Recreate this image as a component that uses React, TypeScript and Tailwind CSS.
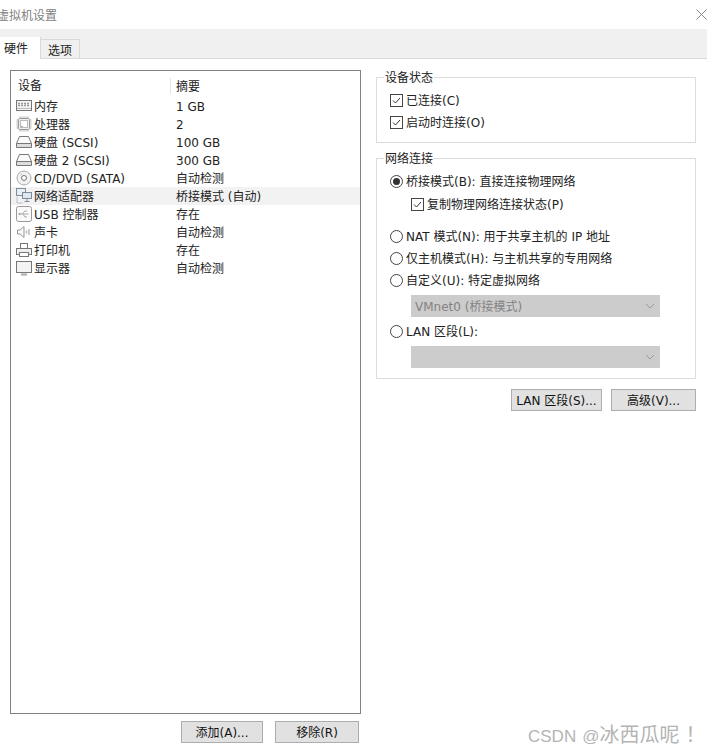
import type { ReactNode } from "react";

const devices: { icon: ReactNode; name: string; summary: string; active?: boolean }[] = [
  { icon: <MemoryIcon />, name: "内存", summary: "1 GB" },
  { icon: <CpuIcon />, name: "处理器", summary: "2" },
  { icon: <DiskIcon />, name: "硬盘 (SCSI)", summary: "100 GB" },
  { icon: <DiskIcon />, name: "硬盘 2 (SCSI)", summary: "300 GB" },
  { icon: <CdIcon />, name: "CD/DVD (SATA)", summary: "自动检测" },
  { icon: <NetIcon />, name: "网络适配器", summary: "桥接模式 (自动)", active: true },
  { icon: <UsbIcon />, name: "USB 控制器", summary: "存在" },
  { icon: <SoundIcon />, name: "声卡", summary: "自动检测" },
  { icon: <PrinterIcon />, name: "打印机", summary: "存在" },
  { icon: <MonitorIcon />, name: "显示器", summary: "自动检测" },
];

function MemoryIcon() {
  return (
    <svg width="16" height="16" viewBox="0 0 16 16" fill="none" stroke="#777">
      <rect x="0.5" y="2.5" width="15" height="10" fill="#f4f4f4" />
      <path d="M2 5.5h12M2 7.5h12" stroke="#999" strokeDasharray="2 1" strokeWidth="1.5" />
      <path d="M1 10.5h14" stroke="#bbb" />
    </svg>
  );
}

function CpuIcon() {
  return (
    <svg width="16" height="16" viewBox="0 0 16 16" fill="none" stroke="#999">
      <rect x="2.5" y="2.5" width="11" height="11" rx="1" fill="#eee" />
      <rect x="4.5" y="4.5" width="7" height="7" fill="#fff" stroke="#bbb" />
      <path d="M4 0.5v2M6 0.5v2M8 0.5v2M10 0.5v2M12 0.5v2M4 13.5v2M6 13.5v2M8 13.5v2M10 13.5v2M12 13.5v2M0.5 4h2M0.5 6h2M0.5 8h2M0.5 10h2M0.5 12h2M13.5 4h2M13.5 6h2M13.5 8h2M13.5 10h2M13.5 12h2" stroke="#aaa" />
      <path d="M5.5 10.5h1" stroke="#555" />
    </svg>
  );
}

function DiskIcon() {
  return (
    <svg width="16" height="16" viewBox="0 0 16 16" fill="none" stroke="#777">
      <path d="M3.5 2.5h9l3 7v4h-15v-4z" fill="#fafafa" />
      <path d="M0.5 9.5h15" />
      <rect x="1" y="10" width="14" height="3" fill="#ddd" stroke="none" />
    </svg>
  );
}

function CdIcon() {
  return (
    <svg width="16" height="16" viewBox="0 0 16 16" fill="none" stroke="#aaa">
      <circle cx="8" cy="8" r="7" fill="#f2f2f2" />
      <circle cx="8" cy="8" r="2.5" fill="#fff" stroke="#777" />
      <path d="M4 5.5a5 5 0 0 1 2-1.5" stroke="#ccc" />
    </svg>
  );
}

function NetIcon() {
  return (
    <svg width="16" height="16" viewBox="0 0 16 16" fill="none" stroke="#7c8c98">
      <rect x="0.5" y="0.5" width="9" height="7" fill="#e8eef3" />
      <rect x="6.5" y="4.5" width="9" height="6" fill="#dce7f0" />
      <path d="M11 10.5v3M8.5 13.5h5" />
      <path d="M1 9.5v5.5h6" stroke="#88a" strokeDasharray="1 1" />
    </svg>
  );
}

function UsbIcon() {
  return (
    <svg width="16" height="16" viewBox="0 0 16 16" fill="none" stroke="#999">
      <rect x="0.5" y="0.5" width="15" height="15" rx="2" fill="#fafafa" />
      <path d="M3.5 8h9M6 8l3-3h2M7 8l2 3h2" stroke="#aaa" />
      <circle cx="3.5" cy="8" r="1" fill="#999" stroke="none" />
    </svg>
  );
}

function SoundIcon() {
  return (
    <svg width="16" height="16" viewBox="0 0 16 16" fill="none" stroke="#999">
      <path d="M1.5 6v4h2.5l4 3.5v-11L4 6z" fill="#f8f8f8" />
      <path d="M10.5 6.5v3M13 5v6" stroke="#bbb" strokeWidth="1.5" />
    </svg>
  );
}

function PrinterIcon() {
  return (
    <svg width="16" height="16" viewBox="0 0 16 16" fill="none" stroke="#777">
      <rect x="4.5" y="1.5" width="7" height="5" fill="#fff" />
      <rect x="0.5" y="6.5" width="15" height="6" fill="#f0f0f0" />
      <rect x="3.5" y="10.5" width="9" height="4" fill="#fff" />
    </svg>
  );
}

function MonitorIcon() {
  return (
    <svg width="16" height="16" viewBox="0 0 16 16" fill="none" stroke="#777">
      <rect x="0.5" y="1.5" width="15" height="11" fill="#f3f3f3" />
      <path d="M5 14.5h6" stroke="#aaa" strokeWidth="2" />
    </svg>
  );
}

function Check({ label }: { label: string }) {
  return (
    <div className="flex h-[14px] items-center gap-[3px]">
      <span className="flex h-[13px] w-[13px] shrink-0 items-center justify-center border border-[#444] bg-white">
        <svg width="11" height="11" viewBox="0 0 11 11" fill="none" stroke="#333">
          <path d="M2 5.5l2.5 2.5L9 3" />
        </svg>
      </span>
      <span className="pt-[2px]">{label}</span>
    </div>
  );
}

function Radio({ label, checked }: { label: string; checked?: boolean }) {
  return (
    <div className="flex h-[14px] items-center gap-[3px]">
      <span className="flex h-[13px] w-[13px] shrink-0 items-center justify-center rounded-full border border-[#444] bg-white">
        {checked && <span className="h-[7px] w-[7px] rounded-full bg-[#333]" />}
      </span>
      <span className="pt-[2px]">{label}</span>
    </div>
  );
}

function DisabledSelect({ value }: { value?: string }) {
  return (
    <div className="ml-[21px] flex h-[22px] w-[249px] items-center justify-between bg-[#cccccc] pl-1 pr-[5px] text-[#838383]">
      <span className="pt-[2px]">{value}</span>
      <svg width="10" height="6" viewBox="0 0 10 6" fill="none" stroke="#999">
        <path d="M1 1l4 4 4-4" />
      </svg>
    </div>
  );
}

function Button({ label, className }: { label: string; className: string }) {
  return (
    <button
      type="button"
      className={`flex h-[22px] items-center justify-center border border-[#adadad] bg-[#e1e1e1] pt-[2px] text-[#111] ${className}`}
    >
      {label}
    </button>
  );
}

function Group({ title, className, children }: { title: string; className: string; children: ReactNode }) {
  return (
    <fieldset className={`relative border border-[#dcdcdc] ${className}`}>
      <span className="absolute -top-[7px] left-[7px] bg-white px-px leading-[14px]">{title}</span>
      {children}
    </fieldset>
  );
}

export default function App() {
  return (
    <div className="relative flex h-[754px] w-[707px] flex-col overflow-hidden bg-white text-[12px] leading-[14px] text-[#222] [font-family:'DejaVu_Sans','Noto_Sans_CJK_SC',sans-serif]">
      <div className="flex h-[29px] items-center justify-between">
        <span className="-ml-[3px] pt-[2px] text-[#808080]">虚拟机设置</span>
        <svg width="11" height="11" viewBox="0 0 11 11" fill="none" stroke="#888">
          <path d="M0.5 0.5l10 10M10.5 0.5l-10 10" />
        </svg>
      </div>

      <div className="flex h-[30px] items-end border-b border-[#d9d9d9] bg-[#f0f0f0]">
        <div className="-mb-px flex h-[22px] w-[41px] items-center border-r border-[#d9d9d9] bg-white pl-[4px] pt-[2px]">硬件</div>
        <div className="flex h-[19px] w-[39px] items-center justify-center border-t border-r border-[#d9d9d9] bg-[#f0f0f0] pt-[3px]">选项</div>
      </div>

      <div className="flex pl-[10px] pt-[11px]">
        <div className="flex w-[351px] flex-col">
          <div className="h-[644px] border border-[#828282] pt-[7px]">
            <div className="flex h-[16px] items-center">
              <span className="w-[159px] pl-[7px]">设备</span>
              <span className="h-[16px] border-l border-[#e5e5e5] pl-[5px] pt-[2px]">摘要</span>
            </div>
            <div className="pt-[3px]">
              {devices.map((d) => (
                <div key={d.name} className={`flex h-[18px] items-center pl-[5px] ${d.active ? "bg-[#f2f2f2]" : ""}`}>
                  <span className="flex w-[17px] shrink-0 items-center">{d.icon}</span>
                  <span className="w-[143px] shrink-0 pl-px pt-[2px]">{d.name}</span>
                  <span className="pt-[2px]">{d.summary}</span>
                </div>
              ))}
            </div>
          </div>
          <div className="flex justify-end gap-[12px] pr-[2px] pt-[7px]">
            <Button label="添加(A)..." className="w-[82px]" />
            <Button label="移除(R)" className="w-[84px]" />
          </div>
        </div>

        <div className="ml-[15px] flex w-[320px] flex-col pt-[7px]">
          <Group title="设备状态" className="flex h-[66px] flex-col gap-[8px] pl-[13px] pt-[15px]">
            <Check label="已连接(C)" />
            <Check label="启动时连接(O)" />
          </Group>

          <Group title="网络连接" className="mt-[15px] h-[221px] pl-[13px] pt-[15px]">
            <Radio label="桥接模式(B): 直接连接物理网络" checked />
            <div className="ml-[21px] mt-[9px]">
              <Check label="复制物理网络连接状态(P)" />
            </div>
            <div className="mt-[18px]">
              <Radio label="NAT 模式(N): 用于共享主机的 IP 地址" />
            </div>
            <div className="mt-[8px]">
              <Radio label="仅主机模式(H): 与主机共享的专用网络" />
            </div>
            <div className="mt-[8px]">
              <Radio label="自定义(U): 特定虚拟网络" />
            </div>
            <div className="mt-[8px]">
              <DisabledSelect value="VMnet0 (桥接模式)" />
            </div>
            <div className="mt-[7px]">
              <Radio label="LAN 区段(L):" />
            </div>
            <div className="mt-[8px]">
              <DisabledSelect />
            </div>
          </Group>

          <div className="mt-[10px] flex justify-end gap-[9px]">
            <Button label="LAN 区段(S)..." className="w-[91px]" />
            <Button label="高级(V)..." className="w-[85px]" />
          </div>
        </div>
      </div>

      <div className="absolute bottom-[6px] left-[528px] flex items-baseline leading-[22px] text-[#b4b4b4] [font-family:'Liberation_Sans','Noto_Sans_CJK_SC',sans-serif]">
        <span className="text-[17px]">CSDN</span>
        <span className="ml-[6px] text-[17px]">@</span>
        <span className="text-[20px]">冰西瓜呢</span>
        <span className="ml-[6px] text-[20px]">！</span>
      </div>
    </div>
  );
}
